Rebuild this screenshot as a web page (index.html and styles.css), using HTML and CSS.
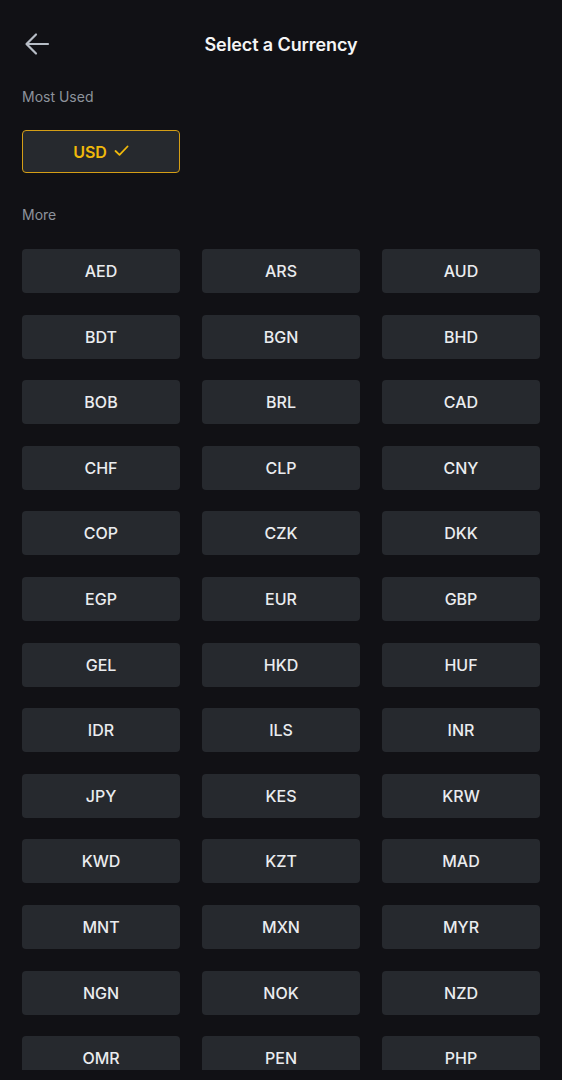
FILE: index.html
```html
<!DOCTYPE html>
<html>
<head>
<meta charset="utf-8">
<link rel="stylesheet" href="styles.css">
</head>
<body>
<div class="page">
  <header class="header">
    <button class="back" aria-label="Back">
      <svg width="26" height="24" viewBox="0 0 26 24"><path d="M24 12H3M12 2.5L2.5 12L12 21.5" fill="none" stroke="#b7bdc6" stroke-width="2.2" stroke-linecap="round" stroke-linejoin="round"/></svg>
    </button>
    <h1 class="title">Select a Currency</h1>
  </header>
  <div class="label label-most">Most Used</div>
  <div class="grid">
    <div class="cell selected">USD <svg class="check" width="15" height="11" viewBox="0 0 15 11"><path d="M1.5 6L5.5 9.8L13.5 1.5" fill="none" stroke="#f0b90b" stroke-width="1.8" stroke-linecap="round" stroke-linejoin="round"/></svg></div>
  </div>
  <div class="label label-more">More</div>
  <div class="scroll">
    <div class="grid">
      <div class="cell">AED</div><div class="cell">ARS</div><div class="cell">AUD</div>
      <div class="cell">BDT</div><div class="cell">BGN</div><div class="cell">BHD</div>
      <div class="cell">BOB</div><div class="cell">BRL</div><div class="cell">CAD</div>
      <div class="cell">CHF</div><div class="cell">CLP</div><div class="cell">CNY</div>
      <div class="cell">COP</div><div class="cell">CZK</div><div class="cell">DKK</div>
      <div class="cell">EGP</div><div class="cell">EUR</div><div class="cell">GBP</div>
      <div class="cell">GEL</div><div class="cell">HKD</div><div class="cell">HUF</div>
      <div class="cell">IDR</div><div class="cell">ILS</div><div class="cell">INR</div>
      <div class="cell">JPY</div><div class="cell">KES</div><div class="cell">KRW</div>
      <div class="cell">KWD</div><div class="cell">KZT</div><div class="cell">MAD</div>
      <div class="cell">MNT</div><div class="cell">MXN</div><div class="cell">MYR</div>
      <div class="cell">NGN</div><div class="cell">NOK</div><div class="cell">NZD</div>
      <div class="cell">OMR</div><div class="cell">PEN</div><div class="cell">PHP</div>
    </div>
  </div>
</div>
</body>
</html>
```

FILE: styles.css
```css
html, body {
  margin: 0;
  padding: 0;
  background: #111115;
}
body {
  font-family: Inter, Roboto, "Liberation Sans", sans-serif;
  color: #eaecef;
}
.page {
  height: 1080px;
  overflow: hidden;
  display: flex;
  flex-direction: column;
}
.header {
  position: relative;
  height: 88px;
  display: flex;
  align-items: center;
  justify-content: center;
  flex-shrink: 0;
}
.back {
  position: absolute;
  left: 24px;
  top: 32px;
  background: none;
  border: 0;
  padding: 0;
  width: 26px;
  height: 24px;
  display: flex;
}
.title {
  margin: 0;
  font-size: 18px;
  font-weight: 600;
  color: #f5f5f5;
  letter-spacing: -0.1px;
}
.label {
  padding: 0 22px;
  font-size: 14px;
  color: #8d939c;
  line-height: 18px;
  flex-shrink: 0;
}
.label-most + .grid {
  margin-top: 24px;
}
.label-more {
  margin-top: 33px;
}
.grid {
  display: grid;
  grid-template-columns: repeat(3, 158px);
  column-gap: 22px;
  row-gap: 21.6px;
  padding: 0 22px;
  flex-shrink: 0;
}
.scroll {
  margin-top: 25px;
  height: 821px;
  overflow: hidden;
  flex-shrink: 0;
}
.cell {
  height: 44px;
  box-sizing: border-box;
  border-radius: 4px;
  background: #26292e;
  display: flex;
  align-items: center;
  justify-content: center;
  gap: 7px;
  font-size: 16px;
  font-weight: 500;
  color: #eaecef;
}
.cell.selected {
  height: 43px;
  border: 1.5px solid #d49e16;
  color: #f0b90b;
  font-weight: 600;
}
.check {
  margin-top: -2px;
}
```
